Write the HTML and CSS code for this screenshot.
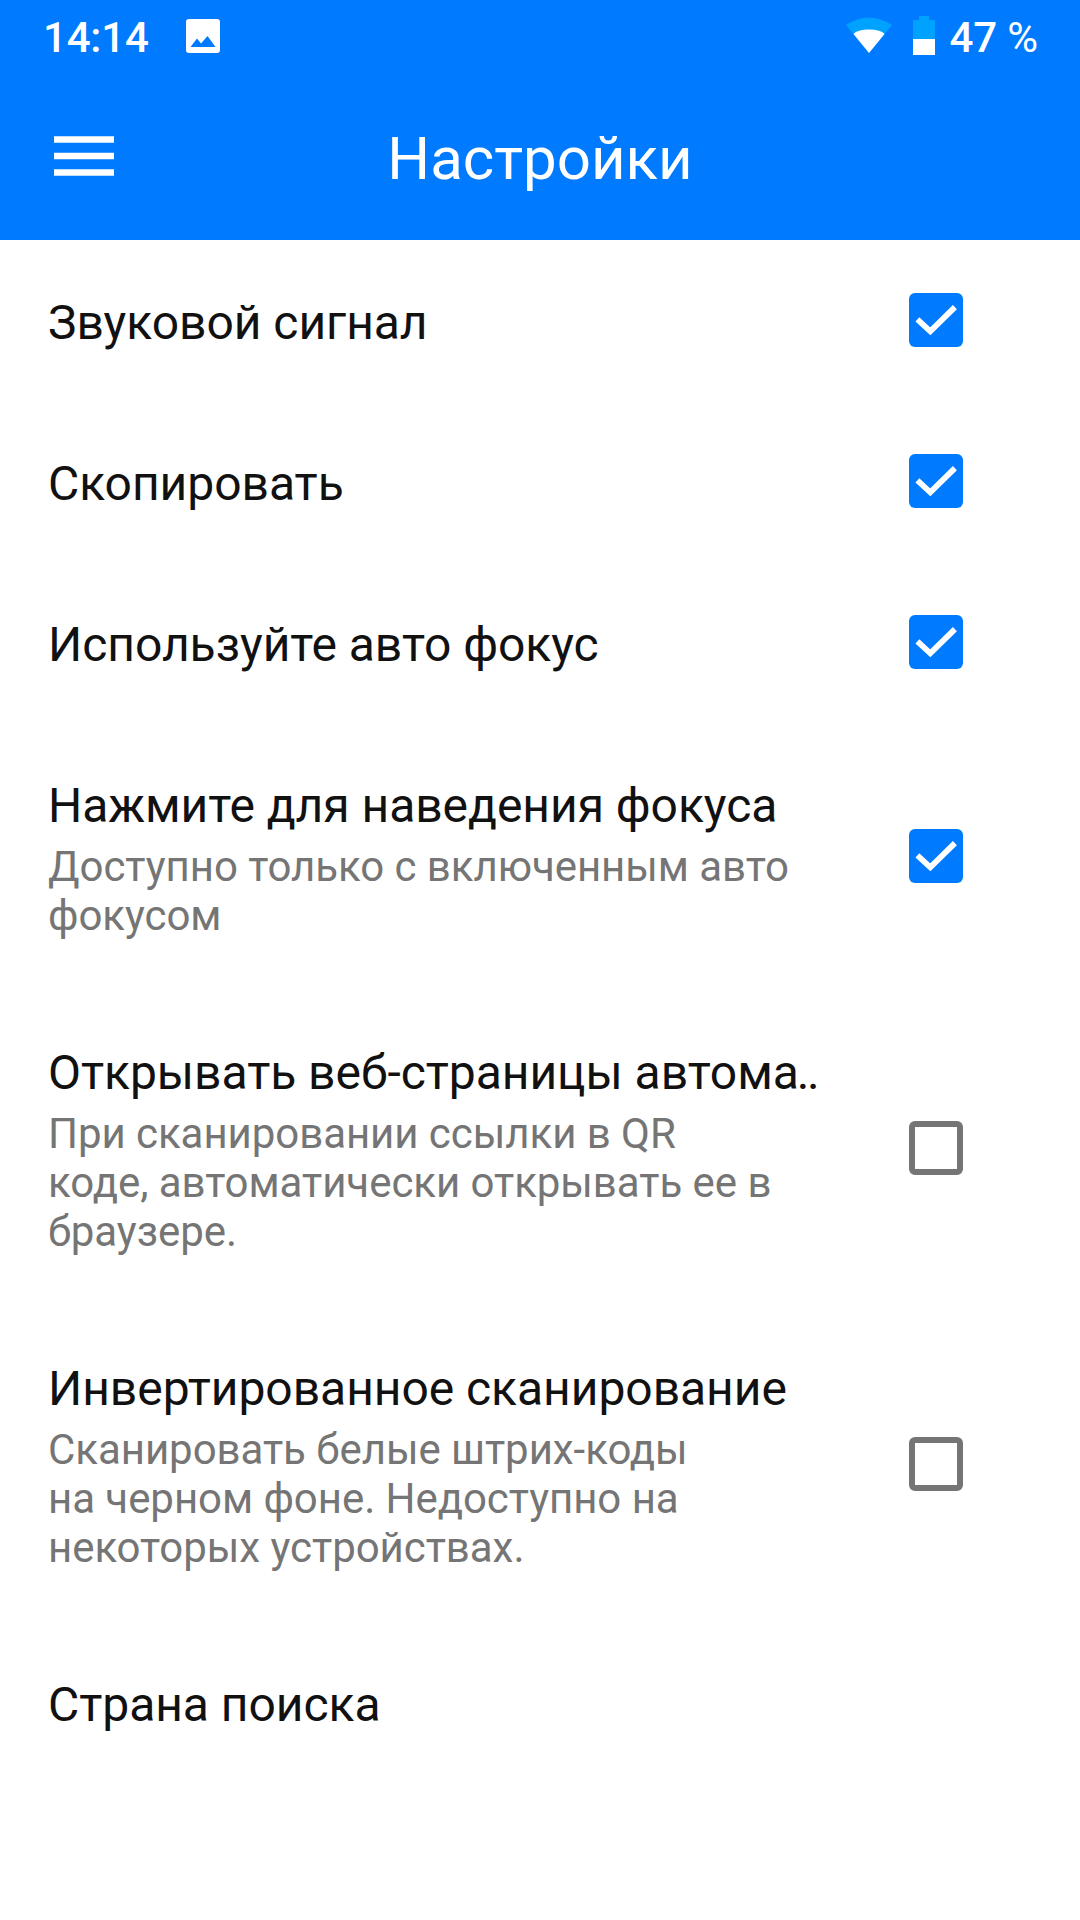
FILE: index.html
```
<!DOCTYPE html>
<html lang="ru">

<head>
    <meta charset="utf-8">
    <title>Настройки</title>
    <meta name="viewport" content="width=device-width, initial-scale=1.0">
    <link rel="stylesheet" href="styles.css">
</head>

<body>
    <header>
        <div class="status">
            <span class="time">14:14</span>
            <svg class="picture" viewBox="0 0 34 34">
                <rect width="34" height="34" rx="3" fill="#fff"/>
                <path d="M4.500 28 L11 19.500 L15 24.500 L21.500 17 L29.500 28 Z" fill="#007aff"/>
            </svg>
            <svg class="wifi" viewBox="0 0 46 37">
                <path d="M0 8 Q23 -7 46 8 L23 36 Z" fill="#00a2ff"/>
                <path d="M7.500 17 Q11 12.500 23 12.500 Q35 12.500 38.500 17 L23 36 Z" fill="#fff"/>
            </svg>
            <svg class="battery" viewBox="0 0 22 39">
                <path d="M6 0 H16 V4 H22 V39 H0 V4 H6 Z" fill="#00a2ff"/>
                <rect y="23" width="22" height="16" fill="#fff"/>
            </svg>
            <span class="percent"><b>47</b> %</span>
        </div>
        <div class="toolbar">
            <svg class="menu" viewBox="0 0 60 40">
                <path d="M0 3.500 H60 M0 20 H60 M0 36.500 H60" stroke="#fff" stroke-width="6.500"/>
            </svg>
            <h1>Настройки</h1>
        </div>
    </header>

    <main>
        <div class="item">
            <div class="text">
                <h2>Звуковой сигнал</h2>
            </div>
            <span class="checkbox checked"><svg viewBox="0 0 18 18"><path d="M2.800 8.800 L7.100 12.800 L15.300 4.700"/></svg></span>
        </div>
        <div class="item">
            <div class="text">
                <h2>Скопировать</h2>
            </div>
            <span class="checkbox checked"><svg viewBox="0 0 18 18"><path d="M2.800 8.800 L7.100 12.800 L15.300 4.700"/></svg></span>
        </div>
        <div class="item">
            <div class="text">
                <h2>Используйте авто фокус</h2>
            </div>
            <span class="checkbox checked"><svg viewBox="0 0 18 18"><path d="M2.800 8.800 L7.100 12.800 L15.300 4.700"/></svg></span>
        </div>
        <div class="item">
            <div class="text">
                <h2>Нажмите для наведения фокуса</h2>
                <p>Доступно только с включенным авто<br>фокусом</p>
            </div>
            <span class="checkbox checked"><svg viewBox="0 0 18 18"><path d="M2.800 8.800 L7.100 12.800 L15.300 4.700"/></svg></span>
        </div>
        <div class="item">
            <div class="text">
                <h2>Открывать веб-страницы автом<span class="cut">а..</span></h2>
                <p>При сканировании ссылки в QR<br>коде, автоматически открывать ее в<br>браузере.</p>
            </div>
            <span class="checkbox"></span>
        </div>
        <div class="item">
            <div class="text">
                <h2>Инвертированное сканирование</h2>
                <p>Сканировать белые штрих-коды<br>на черном фоне. Недоступно на<br>некоторых устройствах.</p>
            </div>
            <span class="checkbox"></span>
        </div>
        <div class="item">
            <div class="text">
                <h2>Страна поиска</h2>
            </div>
        </div>
    </main>
</body>
</html>
```
FILE: styles.css
```
* {
    box-sizing: border-box;
}
body {
    margin: 0;
    background-color: #fff;
    font-family: Roboto, sans-serif;
}
h1, h2, p {
    margin: 0;
    font-weight: normal;
    white-space: nowrap;
}
svg {
    display: block;
    flex: none;
}
header {
    height: 240px;
    background-color: #007aff;
    color: #fff;
}
.status {
    display: flex;
    height: 76px;
    padding: 0 42px 0 43px;
    align-items: center;
    font-size: 42px;
    line-height: 76px;
}
.time {
    width: 143px;
    font-weight: 500;
    letter-spacing: -0.2px;
}
.picture {
    width: 34px;
    height: 34px;
    margin-bottom: 4px;
}
.wifi {
    width: 46px;
    height: 37px;
    margin: 0 21px 6px auto;
}
.battery {
    width: 22px;
    height: 39px;
    margin-bottom: 5px;
}
.percent {
    margin-left: 14px;
    letter-spacing: -0.1px;
}
.percent b {
    font-weight: 500;
}
.toolbar {
    display: grid;
    grid-template-columns: 1fr auto 1fr;
    height: 164px;
    padding: 0 54px;
    align-items: center;
}
.menu {
    width: 60px;
    height: 40px;
    margin-bottom: 4px;
}
h1 {
    font-size: 60px;
    line-height: 70px;
    padding-top: 1px;
}
.item {
    display: flex;
    padding: 55px 117px 50px 48px;
    align-items: center;
    justify-content: space-between;
}
h2 {
    color: #111;
    font-size: 48px;
    line-height: 56px;
    letter-spacing: -0.04px;
}
.cut {
    letter-spacing: -2.2px;
}
p {
    margin-top: 8px;
    color: #757575;
    font-size: 42px;
    line-height: 49px;
    letter-spacing: -0.05px;
}
.checkbox {
    flex: none;
    width: 54px;
    height: 54px;
    margin: -2px 0 4px;
    border: 6px solid #757575;
    border-radius: 6px;
}
.checked {
    border: none;
    background-color: #007aff;
}
.checked path {
    fill: none;
    stroke: #fff;
    stroke-width: 1.900;
}
```
